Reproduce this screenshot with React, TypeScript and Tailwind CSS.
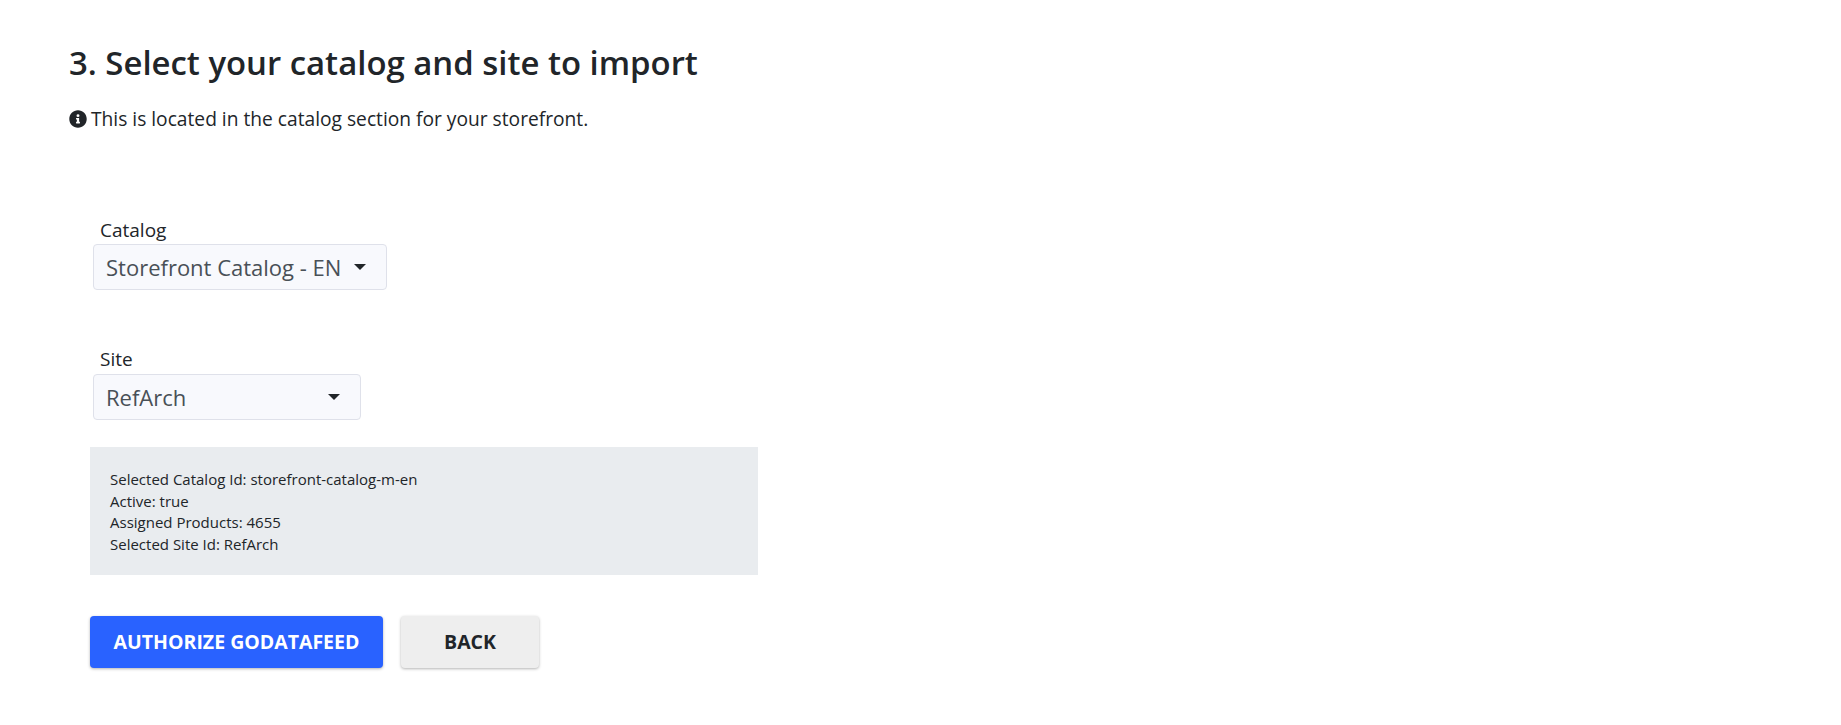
import React from 'react';

function InfoIcon() {
    return (
        <svg viewBox="0 0 512 512" className="w-[18px] h-[18px] fill-[#212529] shrink-0">
            <path d="M256 8C119 8 8 119 8 256s111 248 248 248 248-111 248-248S393 8 256 8zm0 110a42 42 0 1 1 0 84 42 42 0 0 1 0-84zm56 254c0 7-5 12-12 12h-88c-7 0-12-5-12-12v-24c0-7 5-12 12-12h12v-64h-12c-7 0-12-5-12-12v-24c0-7 5-12 12-12h64c7 0 12 5 12 12v100h12c7 0 12 5 12 12v24z" />
        </svg>
    );
}

function SelectBox({ label, value, width, labelGap }: { label: string; value: string; width: string; labelGap: string }) {
    return (
        <div className="flex flex-col items-start">
            <label className="pl-[7px] text-[19px] leading-[24px] text-[#212529]">{label}</label>
            <div className={`${width} ${labelGap} h-[46px] flex items-center justify-between pl-[12px] pr-[20px] bg-[#f8f9fd] border border-[#dfe1ea] rounded-[4px]`}>
                <span className="text-[22px] text-[#495057] whitespace-nowrap">{value}</span>
                <span className="w-0 h-0 border-x-[6px] border-x-transparent border-t-[6px] border-t-[#212529]" />
            </div>
        </div>
    );
}

export default function App() {
    return (
        <div className="w-[1841px] h-[725px] bg-white overflow-hidden pt-[41px] font-['Open_Sans',sans-serif]">
            <div className="pl-[69px]">
                <h1 className="text-[32.9px] leading-[44px] font-semibold text-[#212529]">3. Select your catalog and site to import</h1>
                <p className="mt-[22px] flex items-center gap-[4px] text-[19.2px] leading-[24px] text-[#212529]">
                    <InfoIcon />
                    This is located in the catalog section for your storefront.
                </p>
            </div>
            <div className="pl-[93px] mt-[87px] flex flex-col gap-[57px]">
                <SelectBox label="Catalog" value="Storefront Catalog - EN" width="w-[294px]" labelGap="mt-[2px]" />
                <SelectBox label="Site" value="RefArch" width="w-[268px]" labelGap="mt-[3px]" />
            </div>
            <div className="ml-[90px] mt-[27px] w-[668px] h-[128px] bg-[#e9ecef] pl-[20px] pt-[22px] text-[15px] leading-[21.5px] text-[#212529]">
                <div>Selected Catalog Id: storefront-catalog-m-en</div>
                <div>Active: true</div>
                <div>Assigned Products: 4655</div>
                <div>Selected Site Id: RefArch</div>
            </div>
            <div className="ml-[90px] mt-[41px] flex gap-[18px]">
                <button className="w-[293px] h-[52px] rounded-[4px] bg-[#2962ff] text-white text-[19.5px] font-bold shadow-[0_1px_3px_rgba(0,0,0,0.3)]">AUTHORIZE GODATAFEED</button>
                <button className="w-[138px] h-[52px] rounded-[4px] bg-[#eeeeee] text-[#212529] text-[19.5px] font-bold shadow-[0_1px_3px_rgba(0,0,0,0.3)]">BACK</button>
            </div>
        </div>
    );
}
